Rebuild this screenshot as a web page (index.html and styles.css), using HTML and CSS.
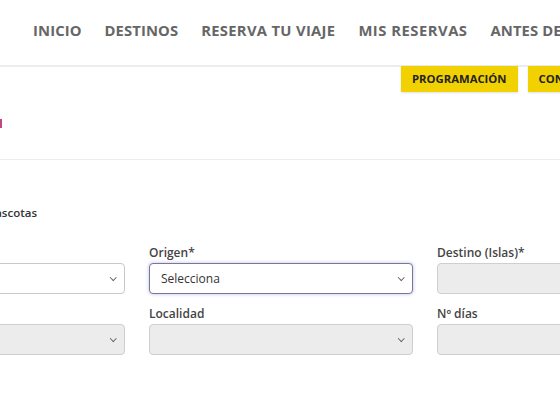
FILE: index.html
```html
<!DOCTYPE html>
<html lang="es">
<head>
<meta charset="utf-8">
<link rel="stylesheet" href="styles.css">
</head>
<body>
<header class="topbar">
  <nav class="nav">
    <a class="nav-item">INICIO</a>
    <a class="nav-item">DESTINOS</a>
    <a class="nav-item">RESERVA TU VIAJE</a>
    <a class="nav-item">MIS RESERVAS</a>
    <a class="nav-item">ANTES DE VIAJAR</a>
  </nav>
</header>
<div class="actions">
  <span class="btn">PROGRAMACIÓN</span>
  <span class="btn">CONTACTO</span>
</div>
<div class="title-row"><span class="title">Reserva tu viaje en tren</span></div>
<hr class="sep">
<main class="form">
  <div class="note">Viajo con mis animales y mascotas</div>
  <div class="grid">
    <div class="field">
      <label>Tipo de viaje*</label>
      <div class="select"><span></span><span class="chev"></span></div>
    </div>
    <div class="field">
      <label>Origen*</label>
      <div class="select focus"><span>Selecciona</span><span class="chev"></span></div>
    </div>
    <div class="field">
      <label>Destino (Islas)*</label>
      <div class="select disabled"><span></span><span class="chev"></span></div>
    </div>
    <div class="field">
      <label>Provincia</label>
      <div class="select disabled"><span></span><span class="chev"></span></div>
    </div>
    <div class="field">
      <label>Localidad</label>
      <div class="select disabled"><span></span><span class="chev"></span></div>
    </div>
    <div class="field">
      <label>Nº días</label>
      <div class="select disabled"><span></span><span class="chev"></span></div>
    </div>
  </div>
</main>
</body>
</html>
```
FILE: styles.css
```css
html, body {
  margin: 0;
  padding: 0;
  background: #fff;
  width: 560px;
  height: 420px;
  overflow: hidden;
  font-family: "Open Sans", "Liberation Sans", sans-serif;
}
.topbar {
  height: 65px;
  border-bottom: 2px solid #ececec;
  display: flex;
  align-items: center;
  white-space: nowrap;
}
.nav {
  display: flex;
  gap: 23px;
  padding-left: 33px;
  padding-bottom: 5px;
}
.nav-item {
  font-size: 14.8px;
  font-weight: 700;
  color: #666;
  letter-spacing: 0.1px;
}
.nav-item:nth-child(3) {
  letter-spacing: 0.3px;
}
.nav-item:nth-child(4) {
  letter-spacing: 0.5px;
}
.actions {
  display: flex;
  gap: 10px;
  padding-left: 401px;
  margin-top: -1px;
  white-space: nowrap;
}
.btn {
  background: #f2d100;
  color: #222;
  font-size: 11.3px;
  font-weight: 700;
  height: 26px;
  line-height: 26px;
  padding: 0 11px;
  box-shadow: 0 1px 2px rgba(0,0,0,0.12);
}
.title-row {
  height: 67px;
  display: flex;
  align-items: center;
}
.title {
  display: block;
  width: 2px;
  height: 9px;
  margin-top: -4px;
  background: #c04a80;
  overflow: hidden;
  color: transparent;
  font-size: 1px;
}
.sep {
  margin: 0;
  border: 0;
  border-top: 1px solid #ececec;
}
.form {
  margin-left: -139px;
  width: 840px;
}
.note {
  margin-top: 45px;
  font-size: 11.5px;
  font-weight: 600;
  color: #333;
  width: 176px;
  text-align: right;
  white-space: nowrap;
  direction: rtl;
  overflow: hidden;
}
.grid {
  display: grid;
  grid-template-columns: 264px 264px 264px;
  column-gap: 24px;
  row-gap: 12px;
  margin-top: 25px;
}
.field {
  display: flex;
  flex-direction: column;
}
.field label {
  font-size: 12px;
  font-weight: 600;
  color: #444;
  height: 18px;
  line-height: 16px;
}
.select {
  box-sizing: border-box;
  height: 31px;
  border: 1px solid #c8c8c8;
  border-radius: 4px;
  background: #fff;
  display: flex;
  align-items: center;
  justify-content: space-between;
  padding: 0 9px 0 11px;
  font-size: 12px;
  font-weight: 500;
  color: #333;
}
.select.focus {
  border-color: #8a7090;
  box-shadow: 0 0 3px 1px rgba(140,180,230,0.45);
}
.select.disabled {
  background: #ececec;
  border-color: #cfcfcf;
}
.chev {
  width: 3.5px;
  height: 3.5px;
  border-right: 1.3px solid #666;
  border-bottom: 1.3px solid #666;
  transform: rotate(45deg);
  margin-top: -3px;
}
```
